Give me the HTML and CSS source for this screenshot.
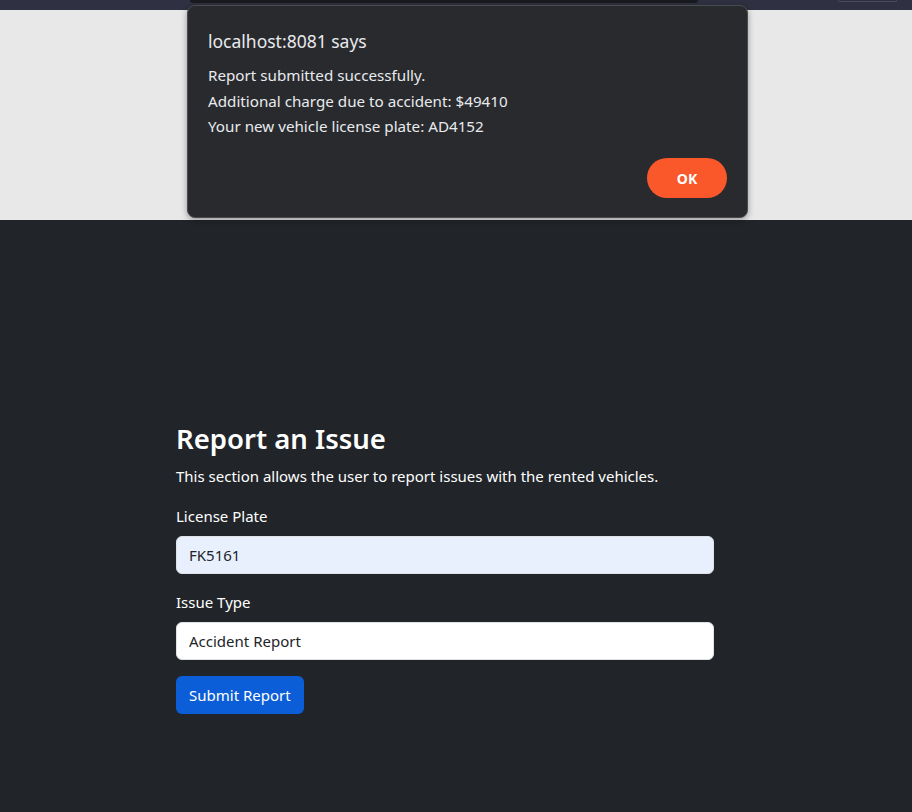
FILE: index.html
```html
<!DOCTYPE html>
<html lang="en">
<head>
<meta charset="utf-8">
<title>Report an Issue</title>
<link rel="stylesheet" href="styles.css">
</head>
<body>
<header class="topbar">
  <div class="topbar-search"></div>
  <div class="topbar-btn"></div>
</header>
<div class="band"></div>
<main class="page">
  <section class="report">
    <h3 class="report-title">Report an Issue</h3>
    <p class="report-desc">This section allows the user to report issues with the rented vehicles.</p>
    <form class="report-form">
      <label class="field-label" for="plate">License Plate</label>
      <input class="field-input autofill" id="plate" type="text" value="FK5161">
      <label class="field-label" for="issue">Issue Type</label>
      <input class="field-input" id="issue" type="text" value="Accident Report">
      <button class="submit-btn" type="button">Submit Report</button>
    </form>
  </section>
</main>
<div class="dialog">
  <div class="dialog-title">localhost:8081 says</div>
  <div class="dialog-body">
    <div>Report submitted successfully.</div>
    <div>Additional charge due to accident: $49410</div>
    <div>Your new vehicle license plate: AD4152</div>
  </div>
  <div class="dialog-actions">
    <button class="ok-btn" type="button">OK</button>
  </div>
</div>
</body>
</html>
```
FILE: styles.css
```css
* { box-sizing: border-box; }
html, body { margin: 0; padding: 0; }
body {
  width: 912px;
  height: 812px;
  overflow: hidden;
  background: #212529;
  font-family: "Noto Sans", "Open Sans", sans-serif;
  color: #ffffff;
  position: relative;
}
.topbar {
  height: 10px;
  background: #2f3142;
  display: flex;
  align-items: flex-start;
}
.topbar-search {
  margin-left: 190px;
  width: 508px;
  height: 3px;
  background: #1a1b21;
  border-radius: 0 0 4px 4px;
}
.topbar-btn {
  margin-left: 140px;
  width: 59px;
  height: 2px;
  border: 1px solid #4a4c5c;
  border-top: none;
  border-radius: 0 0 4px 4px;
}
.band {
  height: 210px;
  background: #e8e8e8;
}
.page {
  padding-top: 202px;
}
.report {
  margin-left: 176px;
  width: 538px;
}
.report-title {
  margin: 0 0 8px;
  font-size: 27.5px;
  font-weight: 600;
  line-height: 34px;
}
.report-desc {
  margin: 0 0 16px;
  font-size: 15px;
  line-height: 24px;
}
.report-form {
  display: flex;
  flex-direction: column;
}
.field-label {
  font-size: 15px;
  line-height: 24px;
  margin-bottom: 8px;
}
.field-input {
  height: 38px;
  width: 100%;
  border: 1px solid #dee2e6;
  border-radius: 6px;
  padding: 0 12px;
  font-family: inherit;
  font-size: 15px;
  color: #212529;
  background: #ffffff;
  margin-bottom: 16px;
  outline: none;
}
.field-input.autofill { background: #e8f0fe; }
.submit-btn {
  align-self: flex-start;
  height: 38px;
  padding: 0 13px;
  border: none;
  border-radius: 6px;
  background: #0b5ed7;
  color: #ffffff;
  font-family: inherit;
  font-size: 15px;
}
.dialog {
  position: absolute;
  left: 187px;
  top: 5px;
  width: 561px;
  height: 213px;
  background: #292a2d;
  border: 1px solid #4b4c4f;
  border-radius: 8px;
  box-shadow: 0 2px 6px rgba(0,0,0,0.35);
  padding: 24px 20px 19px 20px;
  display: flex;
  flex-direction: column;
}
.dialog-title {
  font-size: 17.5px;
  line-height: 22px;
  color: #e8eaed;
  margin-bottom: 11px;
}
.dialog-body {
  font-size: 15.2px;
  line-height: 25.5px;
  color: #e8eaed;
}
.dialog-actions {
  margin-top: auto;
  display: flex;
  justify-content: flex-end;
}
.ok-btn {
  width: 80px;
  height: 40px;
  border: none;
  border-radius: 20px;
  background: #fa582a;
  color: #ffffff;
  font-family: inherit;
  font-weight: 700;
  font-size: 14px;
}
```
